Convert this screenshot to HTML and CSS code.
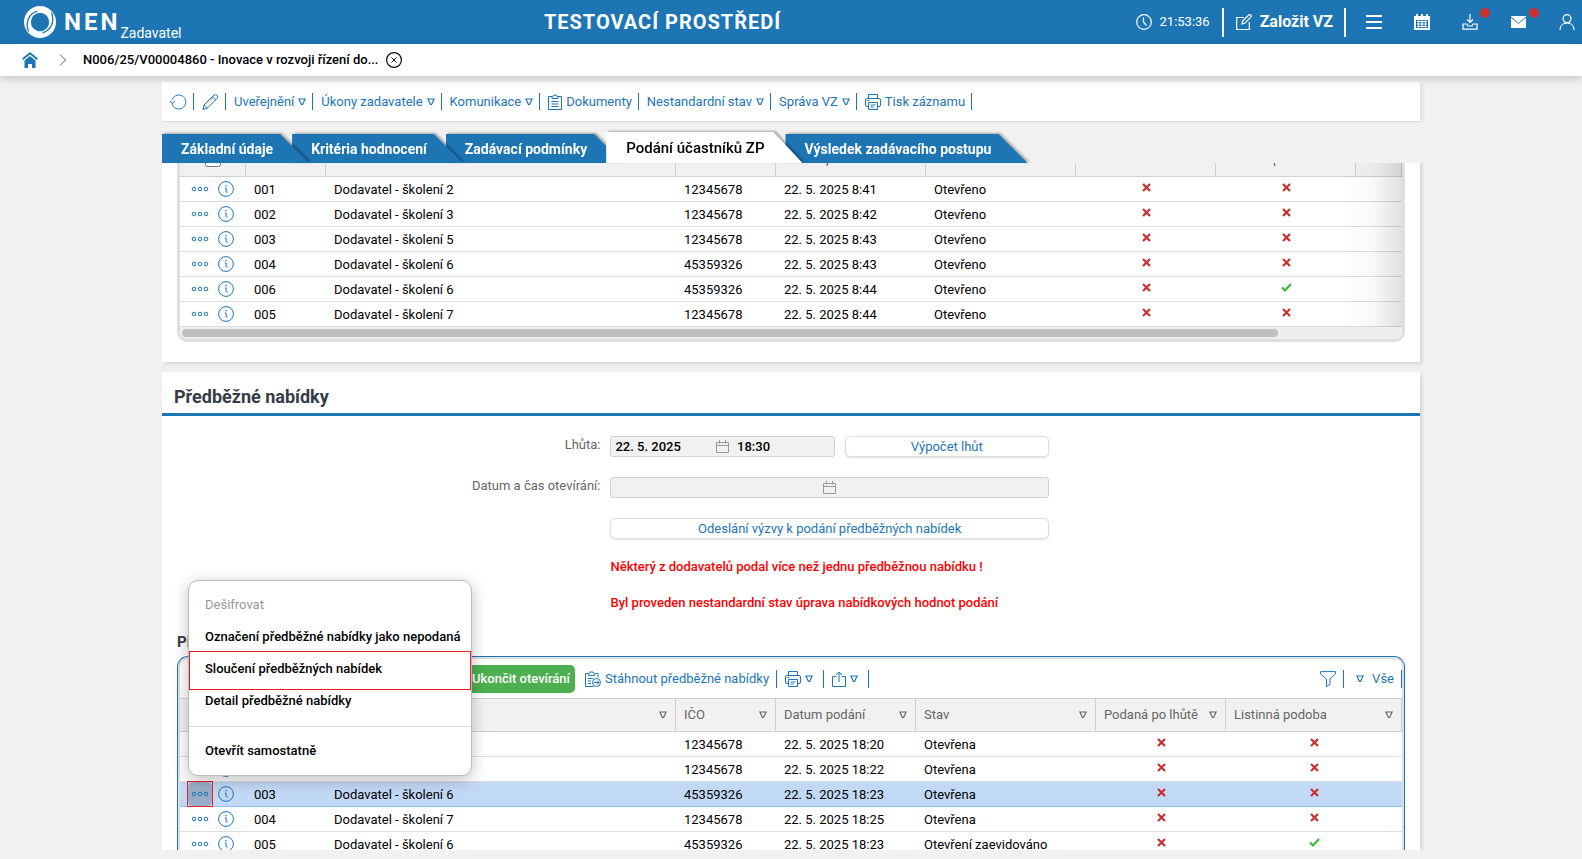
FILE: index.html
```html
<!DOCTYPE html>
<html lang="cs">
<head>
    <meta charset="UTF-8">
    <meta name="viewport" content="width=device-width, initial-scale=1.0">
    <title>NEN - Podání účastníků ZP</title>
    <link rel="stylesheet" href="styles.css">
</head>
<body>
    <svg class="sprite" aria-hidden="true">
        <symbol id="i-arrow" viewBox="0 0 8 8"><path d="M.9 1h6.2L4.6 6.4H3.4z" fill="none" stroke="currentColor" stroke-width="1.2"/></symbol>
        <symbol id="i-dots" viewBox="0 0 18 6"><g fill="none" stroke="currentColor"><circle cx="3" cy="3" r="1.8"/><circle cx="9" cy="3" r="1.8"/><circle cx="15" cy="3" r="1.8"/></g></symbol>
        <symbol id="i-info" viewBox="0 0 16 16"><g fill="none" stroke="currentColor"><circle cx="8" cy="8" r="7.4"/><path d="M6.800 7h1.300v3.600q0 .8 1.500.4" /></g><circle cx="8" cy="4.700" r=".8" fill="currentColor"/></symbol>
        <symbol id="i-cross" viewBox="0 0 9 9"><path d="M1 1l7 7M8 1L1 8" fill="none" stroke="#c9302f" stroke-width="2.2"/></symbol>
        <symbol id="i-check" viewBox="0 0 11 9"><path d="M1 4.5l3 3L10 1" fill="none" stroke="#3cb83c" stroke-width="2.2"/></symbol>
        <symbol id="i-calendar" viewBox="0 0 13 13"><path d="M.5 2.500h12v10H.5zM.5 5.500h12M3.500 0v3.500M9.500 0v3.500" fill="none" stroke="currentColor"/></symbol>
        <symbol id="i-print" viewBox="0 0 16 16"><g fill="none" stroke="currentColor"><path d="M3.5 4.5v-4h9v4M3.5 12.500H2q-1.500 0-1.500-1.500V6q0-1.500 1.500-1.500h12q1.500 0 1.500 1.500v5q0 1.500-1.500 1.500h-1.500"/><path d="M3.500 8.500h9v7h-9zM5.500 11h5M5.500 13h3M2.500 6.500h2"/></g></symbol>
    </svg>

    <header class="topbar">
        <a class="logo" href="#">
            <svg width="32" height="32" viewBox="0 0 32 32"><circle cx="16" cy="16" r="16" fill="#fff"/><circle cx="16" cy="16" r="9.200" fill="#1d75b4"/><path d="M4.500 25.500C1 16 5 7.500 13.500 5.200M27.500 6.500C31 16 27 24.500 18.500 26.800" fill="none" stroke="#1d75b4" stroke-width="1.300"/></svg>
            <span class="logo-name">NEN</span>
            <span class="logo-role">Zadavatel</span>
        </a>
        <div class="env-title">TESTOVACÍ PROSTŘEDÍ</div>
        <div class="clock">
            <svg width="16" height="16" viewBox="0 0 16 16" fill="none" stroke="currentColor" stroke-width="1.2"><circle cx="8" cy="8" r="7.300"/><path d="M7.500 3.500V8l3 3.500"/></svg>
            <span>21:53:36</span>
        </div>
        <button class="create">
            <svg width="16" height="16" viewBox="0 0 16 16" fill="none" stroke="currentColor" stroke-width="1.200"><path d="M8 3.500H.7v12h12.600V8M6 10l.6-3L13 .8q1-.6 1.800.2t.2 1.800L8.700 9.300z"/></svg>
            Založit VZ
        </button>
        <nav class="top-icons">
            <button aria-label="Menu"><svg width="16" height="16" viewBox="0 0 16 16"><path d="M0 2h16M0 8h16M0 14h16" stroke="#fff" stroke-width="2"/></svg></button>
            <button aria-label="Kalendář"><svg width="16" height="16" viewBox="0 0 16 16"><path fill="#fff" fill-rule="evenodd" d="M0 2h2V0h2v2h3V0h2v2h3V0h2v2h2v14H0zM2 6v8h12V6z"/><path d="M3 7.500h10M3 10h10M3 12.500h10M4.500 6.500v7M8 6.500v7M11.500 6.500v7" stroke="#fff"/></svg></button>
            <button class="has-news" aria-label="Stahování"><svg width="16" height="16" viewBox="0 0 16 16" fill="none" stroke="#fff" stroke-width="1.200"><path d="M8 0v8M5 5.500l3 3 3-3M1 10v5.200h14V10h-4l-1 2H6l-1-2z"/></svg></button>
            <button class="has-news" aria-label="Zprávy"><svg width="17" height="16" viewBox="0 0 17 16"><path fill="#fff" d="M1 2h15v12H1z"/><path d="M1 3l7.500 6.500L16 3" fill="none" stroke="#1d75b4" stroke-width="1"/></svg></button>
            <button aria-label="Uživatel"><svg width="16" height="16" viewBox="0 0 16 16" fill="none" stroke="#fff" stroke-width="1.200"><circle cx="8" cy="4.700" r="4"/><path d="M1 16c0-4.500 3-7 7-7s7 2.500 7 7"/></svg></button>
        </nav>
    </header>

    <nav class="breadcrumb">
        <a href="#" aria-label="Domů"><svg width="16" height="16" viewBox="0 0 16 16"><path fill="#1d75b4" d="M2.500 8.500L8 4l5.500 4.500V16h-3.500v-4H6v4H2.500z"/><path d="M.7 7.300L8 1.200l7.300 6.100" fill="none" stroke="#1d75b4" stroke-width="1.800"/></svg></a>
        <svg width="8" height="12" viewBox="0 0 8 12"><path d="M1 .5L6.500 6 1 11.500" fill="none" stroke="#666"/></svg>
        <a class="record" href="#">N006/25/V00004860 - Inovace v rozvoji řízení do...</a>
        <button aria-label="Zavřít"><svg width="16" height="16" viewBox="0 0 16 16" fill="none" stroke="#111"><circle cx="8" cy="8" r="7.400" stroke-width="1.200"/><path d="M5.500 5.500l5 5M10.500 5.500l-5 5"/></svg></button>
    </nav>

    <main>
        <div class="toolbar">
            <button aria-label="Obnovit"><svg width="17" height="16" viewBox="0 0 17 16" fill="none" stroke="currentColor"><path d="M2 9.500A7 7 0 1 0 2.300 5.500M0 6.500l2 3 3-2.500"/></svg></button>
            <button aria-label="Upravit"><svg width="17" height="16" viewBox="0 0 17 16" fill="none" stroke="currentColor"><path d="M1 15.500l1-4.500L12 1.200q1.500-1.200 3 .2t.2 3L5.500 14zM10.500 2.800l3.300 3.200M2 11l3.500 3M4 9l7-6.500"/></svg></button>
            <button>Uveřejnění <svg class="arrow"><use href="#i-arrow"/></svg></button>
            <button>Úkony zadavatele <svg class="arrow"><use href="#i-arrow"/></svg></button>
            <button>Komunikace <svg class="arrow"><use href="#i-arrow"/></svg></button>
            <button><svg width="14" height="16" viewBox="0 0 14 16" fill="none" stroke="currentColor"><path d="M4 2.500H.5v13h13v-13H10M4 4.500v-2q1.500 0 2-1.500h2q.5 1.500 2 1.500v2zM3.500 7.500h7M3.500 10h7M3.500 12.500h7"/></svg> Dokumenty</button>
            <button>Nestandardní stav <svg class="arrow"><use href="#i-arrow"/></svg></button>
            <button>Správa VZ <svg class="arrow"><use href="#i-arrow"/></svg></button>
            <button><svg width="16" height="16"><use href="#i-print"/></svg> Tisk záznamu</button>
        </div>

        <ul class="tabs">
            <li><a href="#">Základní údaje</a></li>
            <li><a href="#">Kritéria hodnocení</a></li>
            <li><a href="#">Zadávací podmínky</a></li>
            <li class="active"><a href="#">Podání účastníků ZP</a></li>
            <li><a href="#">Výsledek zadávacího postupu</a></li>
        </ul>

        <div class="content">
            <section class="panel requests">
                <div class="grid fade">
                    <table>
                        <colgroup><col class="c-actions"><col class="c-num"><col class="c-name"><col class="c-id"><col class="c-date"><col class="c-date"><col class="c-flag"><col class="c-flag"><col></colgroup>
                        <thead>
                            <tr><th class="pick"><input type="checkbox" aria-label="Vybrat vše"></th><th aria-label="Číslo"></th><th aria-label="Dodavatel"></th><th aria-label="IČO"></th><th>Datum podání</th><th aria-label="Stav"></th><th></th><th>Listinná podoba</th><th></th></tr>
                        </thead>
                        <tbody>
                            <tr><td class="actions"><button class="more" aria-label="Akce"><svg><use href="#i-dots"/></svg></button><button class="info" aria-label="Detail"><svg><use href="#i-info"/></svg></button></td><td>001</td><td>Dodavatel - školení 2</td><td>12345678</td><td>22. 5. 2025 8:41</td><td>Otevřeno</td><td class="flag"><svg><use href="#i-cross"/></svg></td><td class="flag"><svg><use href="#i-cross"/></svg></td><td></td></tr>
                            <tr><td class="actions"><button class="more" aria-label="Akce"><svg><use href="#i-dots"/></svg></button><button class="info" aria-label="Detail"><svg><use href="#i-info"/></svg></button></td><td>002</td><td>Dodavatel - školení 3</td><td>12345678</td><td>22. 5. 2025 8:42</td><td>Otevřeno</td><td class="flag"><svg><use href="#i-cross"/></svg></td><td class="flag"><svg><use href="#i-cross"/></svg></td><td></td></tr>
                            <tr><td class="actions"><button class="more" aria-label="Akce"><svg><use href="#i-dots"/></svg></button><button class="info" aria-label="Detail"><svg><use href="#i-info"/></svg></button></td><td>003</td><td>Dodavatel - školení 5</td><td>12345678</td><td>22. 5. 2025 8:43</td><td>Otevřeno</td><td class="flag"><svg><use href="#i-cross"/></svg></td><td class="flag"><svg><use href="#i-cross"/></svg></td><td></td></tr>
                            <tr><td class="actions"><button class="more" aria-label="Akce"><svg><use href="#i-dots"/></svg></button><button class="info" aria-label="Detail"><svg><use href="#i-info"/></svg></button></td><td>004</td><td>Dodavatel - školení 6</td><td>45359326</td><td>22. 5. 2025 8:43</td><td>Otevřeno</td><td class="flag"><svg><use href="#i-cross"/></svg></td><td class="flag"><svg><use href="#i-cross"/></svg></td><td></td></tr>
                            <tr><td class="actions"><button class="more" aria-label="Akce"><svg><use href="#i-dots"/></svg></button><button class="info" aria-label="Detail"><svg><use href="#i-info"/></svg></button></td><td>006</td><td>Dodavatel - školení 6</td><td>45359326</td><td>22. 5. 2025 8:44</td><td>Otevřeno</td><td class="flag"><svg><use href="#i-cross"/></svg></td><td class="flag"><svg><use href="#i-check"/></svg></td><td></td></tr>
                            <tr><td class="actions"><button class="more" aria-label="Akce"><svg><use href="#i-dots"/></svg></button><button class="info" aria-label="Detail"><svg><use href="#i-info"/></svg></button></td><td>005</td><td>Dodavatel - školení 7</td><td>12345678</td><td>22. 5. 2025 8:44</td><td>Otevřeno</td><td class="flag"><svg><use href="#i-cross"/></svg></td><td class="flag"><svg><use href="#i-cross"/></svg></td><td></td></tr>
                        </tbody>
                    </table>
                    <div class="scrollbar"><div class="thumb"></div></div>
                </div>
            </section>

            <section class="panel offers">
                <h2>Předběžné nabídky</h2>

                <div class="form">
                    <label for="deadline">Lhůta:</label>
                    <div class="form-row">
                        <div class="datetime">
                            <input type="text" id="deadline" value="22. 5. 2025" readonly>
                            <svg width="13" height="13"><use href="#i-calendar"/></svg>
                            <input type="text" aria-label="Čas lhůty" value="18:30" readonly>
                        </div>
                        <button class="btn">Výpočet lhůt</button>
                    </div>

                    <label for="opening">Datum a čas otevírání:</label>
                    <div class="datetime">
                        <input type="text" id="opening" readonly>
                        <svg width="13" height="13"><use href="#i-calendar"/></svg>
                        <input type="text" aria-label="Čas otevírání" readonly>
                    </div>

                    <button class="btn wide">Odeslání výzvy k podání předběžných nabídek</button>
                    <p class="warning">Některý z dodavatelů podal více než jednu předběžnou nabídku !</p>
                    <p class="warning">Byl proveden nestandardní stav úprava nabídkových hodnot podání</p>
                </div>

                <h3>Předběžné nabídky</h3>
                <div class="grid selected">
                    <div class="grid-toolbar">
                        <button class="finish"><svg width="14" height="14" viewBox="0 0 14 14" fill="none" stroke="#fff"><path d="M1 1h12v12H1zM4 7l2 2 4-4"/></svg>Ukončit otevírání</button>
                        <button class="tool"><svg width="16" height="16" viewBox="0 0 16 16" fill="none" stroke="currentColor"><path d="M3.500 2.500h-3v13h8M10.500 2.500h2.500v4M3.500 4.500v-2q1.200 0 1.500-1.500h3q.3 1.500 1.500 1.500v2zM3 7.500h5M3 10h3M3 12.500h3"/><circle cx="11.500" cy="11.500" r="4"/><path d="M8.500 11.500h5.500M12 9.500l2 2-2 2"/></svg>Stáhnout předběžné nabídky</button>
                        <button class="tool drop" aria-label="Tisk"><svg width="16" height="16"><use href="#i-print"/></svg><svg class="arrow"><use href="#i-arrow"/></svg></button>
                        <button class="tool drop" aria-label="Export"><svg width="14" height="16" viewBox="0 0 14 16" fill="none" stroke="currentColor"><path d="M4 5.500H.5v10h13v-10H10M7 11V1M4 4l3-3 3 3"/></svg><svg class="arrow"><use href="#i-arrow"/></svg></button>
                        <button class="tool filter" aria-label="Filtr"><svg width="16" height="16" viewBox="0 0 16 16" fill="none" stroke="currentColor"><path d="M.6.600h14.800V3L10 8v5.500l-3.500 2V8L.6 3z"/></svg></button>
                        <button class="tool all"><svg class="arrow"><use href="#i-arrow"/></svg>Vše</button>
                    </div>
                    <table>
                        <colgroup><col class="c-actions"><col class="c-num"><col class="c-name"><col class="c-id"><col class="c-sent"><col class="c-state"><col class="c-late"><col></colgroup>
                        <thead>
                            <tr>
                                <th></th>
                                <th></th>
                                <th><div class="head"><span></span><svg class="arrow"><use href="#i-arrow"/></svg></div></th>
                                <th><div class="head">IČO<svg class="arrow"><use href="#i-arrow"/></svg></div></th>
                                <th><div class="head">Datum podání<svg class="arrow"><use href="#i-arrow"/></svg></div></th>
                                <th><div class="head">Stav<svg class="arrow"><use href="#i-arrow"/></svg></div></th>
                                <th><div class="head">Podaná po lhůtě<svg class="arrow"><use href="#i-arrow"/></svg></div></th>
                                <th><div class="head">Listinná podoba<svg class="arrow"><use href="#i-arrow"/></svg></div></th>
                            </tr>
                        </thead>
                        <tbody>
                            <tr><td class="actions"><button class="more" aria-label="Akce"><svg><use href="#i-dots"/></svg></button><button class="info" aria-label="Detail"><svg><use href="#i-info"/></svg></button></td><td></td><td></td><td>12345678</td><td>22. 5. 2025 18:20</td><td>Otevřena</td><td class="flag"><svg><use href="#i-cross"/></svg></td><td class="flag"><svg><use href="#i-cross"/></svg></td></tr>
                            <tr><td class="actions"><button class="more" aria-label="Akce"><svg><use href="#i-dots"/></svg></button><button class="info" aria-label="Detail"><svg><use href="#i-info"/></svg></button></td><td></td><td></td><td>12345678</td><td>22. 5. 2025 18:22</td><td>Otevřena</td><td class="flag"><svg><use href="#i-cross"/></svg></td><td class="flag"><svg><use href="#i-cross"/></svg></td></tr>
                            <tr class="current"><td class="actions"><button class="more" aria-label="Akce"><svg><use href="#i-dots"/></svg></button><button class="info" aria-label="Detail"><svg><use href="#i-info"/></svg></button></td><td>003</td><td>Dodavatel - školení 6</td><td>45359326</td><td>22. 5. 2025 18:23</td><td>Otevřena</td><td class="flag"><svg><use href="#i-cross"/></svg></td><td class="flag"><svg><use href="#i-cross"/></svg></td></tr>
                            <tr><td class="actions"><button class="more" aria-label="Akce"><svg><use href="#i-dots"/></svg></button><button class="info" aria-label="Detail"><svg><use href="#i-info"/></svg></button></td><td>004</td><td>Dodavatel - školení 7</td><td>12345678</td><td>22. 5. 2025 18:25</td><td>Otevřena</td><td class="flag"><svg><use href="#i-cross"/></svg></td><td class="flag"><svg><use href="#i-cross"/></svg></td></tr>
                            <tr><td class="actions"><button class="more" aria-label="Akce"><svg><use href="#i-dots"/></svg></button><button class="info" aria-label="Detail"><svg><use href="#i-info"/></svg></button></td><td>005</td><td>Dodavatel - školení 6</td><td>45359326</td><td>22. 5. 2025 18:23</td><td>Otevření zaevidováno</td><td class="flag"><svg><use href="#i-cross"/></svg></td><td class="flag"><svg><use href="#i-check"/></svg></td></tr>
                        </tbody>
                    </table>
                </div>

                <div class="context-menu">
                    <button disabled>Dešifrovat</button>
                    <button>Označení předběžné nabídky jako nepodaná</button>
                    <button class="marked">Sloučení předběžných nabídek</button>
                    <button>Detail předběžné nabídky</button>
                    <hr>
                    <button>Otevřít samostatně</button>
                </div>
            </section>
        </div>
    </main>
</body>
</html>
```
FILE: styles.css
```css
/* Základ */
* {
    box-sizing: border-box;
}

body {
    margin: 0;
    height: 100vh;
    display: flex;
    flex-direction: column;
    overflow: hidden;
    font-family: Roboto, "Liberation Sans", sans-serif;
    font-size: 13px;
    line-height: 16px;
    color: #000;
    background-color: #f1f1f1;
}

button {
    padding: 0;
    border: none;
    background: none;
    font: inherit;
    color: inherit;
    cursor: pointer;
}

a {
    color: inherit;
    text-decoration: none;
}

svg {
    flex: none;
    display: block;
}

.sprite {
    position: absolute;
    width: 0;
    height: 0;
}

.arrow {
    width: 8px;
    height: 8px;
}

/* Horní lišta */
.topbar {
    flex: none;
    height: 44px;
    display: flex;
    align-items: center;
    padding: 0 7px 0 24px;
    background-color: #1d75b4;
    color: #fff;
}

.logo {
    display: flex;
    align-items: center;
}

.logo-name {
    margin-left: 8px;
    font-size: 24px;
    font-weight: bold;
    letter-spacing: 3px;
}

.logo-role {
    align-self: flex-end;
    font-size: 14px;
    line-height: 10px;
}

.env-title {
    flex: 1;
    padding-left: 8px;
    text-align: center;
    font-size: 20px;
    font-weight: bold;
    letter-spacing: 1px;
}

.clock {
    display: flex;
    align-items: center;
    gap: 8px;
    padding-right: 12px;
}

.create {
    height: 29px;
    display: flex;
    align-items: center;
    gap: 8px;
    padding: 0 11px 0 12px;
    border: solid #fff;
    border-width: 0 2px;
    font-size: 16px;
    font-weight: bold;
}

.top-icons {
    display: flex;
    gap: 32px;
    padding-left: 20px;
}

.top-icons button {
    position: relative;
}

.has-news::after {
    content: "";
    position: absolute;
    top: -6px;
    right: -12px;
    width: 10px;
    height: 10px;
    border-radius: 50%;
    background-color: #c9302f;
}

.breadcrumb {
    flex: none;
    position: relative;
    z-index: 5;
    height: 32px;
    display: flex;
    align-items: center;
    padding-left: 22px;
    background-color: #fff;
    box-shadow: 0 2px 8px rgba(0, 0, 0, 0.2);
}

.breadcrumb > svg {
    margin: 0 16px 0 21px;
}

.record {
    margin-right: 8px;
    font-weight: 500;
}

/* Obsah */
main {
    flex: 1;
    min-height: 0;
    width: 100%;
    max-width: 1258px;
    margin: 6px auto 9px;
    display: flex;
    flex-direction: column;
}

.toolbar {
    flex: none;
    height: 40px;
    display: flex;
    align-items: center;
    background-color: #fff;
    color: #1d75b4;
    border-bottom: 1px solid #ddd;
    box-shadow: 3px 0 3px rgba(0, 0, 0, 0.06);
}

.toolbar button {
    height: 17px;
    display: flex;
    align-items: center;
    gap: 4px;
    padding: 0 6px 0 8px;
    line-height: 14px;
    border-right: 1px solid #1d75b4;
}

/* Záložky */
.tabs {
    flex: none;
    position: relative;
    z-index: 2;
    height: 41px;
    margin: 0;
    padding: 0;
    display: flex;
    align-items: flex-end;
    list-style: none;
}

.tabs li {
    position: relative;
    margin-right: -17px;
    filter: drop-shadow(2px -1px 1px rgba(0, 0, 0, 0.3));
}

.tabs li:nth-child(1) {
    z-index: 3;
}

.tabs li:nth-child(2) {
    z-index: 2;
}

.tabs a {
    display: block;
    height: 29px;
    padding: 0 36px 0 19px;
    line-height: 31px;
    font-size: 14px;
    font-weight: bold;
    color: #fff;
    background-color: #1d75b4;
    clip-path: polygon(0 0, calc(100% - 29px) 0, 100% 100%, 0 100%);
}

.tabs .active {
    z-index: 4;
}

.tabs .active a {
    height: 31px;
    padding: 0 38px 0 20px;
    line-height: 33px;
    font-size: 15px;
    font-weight: 500;
    color: #000;
    background-color: #fff;
}

.content {
    flex: 1;
    min-height: 0;
    margin-right: -8px;
    padding-right: 8px;
    overflow: hidden;
}

.panel {
    position: relative;
    background-color: #fff;
    box-shadow: 2px 2px 4px rgba(0, 0, 0, 0.12);
}

.requests {
    padding: 0 15px 20px;
    margin-bottom: 10px;
}

.offers {
    height: 700px;
}

/* Tabulky */
.grid {
    position: relative;
    border: 3px solid #dedfe1;
    border-radius: 10px;
    overflow: hidden;
}

/* hlavička je odrolovaná pod záložky */
.requests .grid {
    margin-top: -25px;
}

.fade::after {
    content: "";
    position: absolute;
    top: 0;
    right: 0;
    bottom: 12px;
    width: 56px;
    background: linear-gradient(to right, rgba(0, 0, 0, 0), rgba(0, 0, 0, 0.03) 50%, rgba(0, 0, 0, 0.12));
}

table {
    width: 100%;
    table-layout: fixed;
    border-collapse: separate;
    border-spacing: 0;
}

.c-actions { width: 66px; }
.c-num { width: 80px; }
.c-name { width: 350px; }
.c-id { width: 100px; }
.c-date { width: 150px; }
.c-flag { width: 140px; }
.c-sent { width: 140px; }
.c-state { width: 180px; }
.c-late { width: 130px; }

th {
    height: 36px;
    padding: 0 8px;
    text-align: left;
    font-weight: normal;
    color: #666;
    background-color: #f1f1f1;
    border-right: 1px solid #d0d0d0;
    border-bottom: 1px solid #d0d0d0;
}

.pick {
    padding-left: 25px;
}

.pick input {
    display: block;
    width: 16px;
    height: 16px;
    margin: 0;
}

.head {
    display: flex;
    align-items: center;
    justify-content: space-between;
    white-space: nowrap;
}

td {
    height: 25px;
    padding: 1px 8px 0;
    border-bottom: 1px solid #ddd;
}

.actions {
    padding: 0;
}

.actions button {
    height: 24px;
    float: left;
}

.more {
    position: relative;
    width: 24px;
    margin: 0 6px 0 8px;
    border-radius: 5px;
    color: #1d75b4;
}

.more svg {
    width: 18px;
    height: 6px;
    margin: 0 auto;
}

.info {
    color: #1d75b4;
}

.info svg {
    width: 16px;
    height: 16px;
}

.flag svg {
    width: 11px;
    height: 9px;
    margin: 0 auto 4px;
}

.scrollbar {
    height: 12px;
    padding: 2px;
    background-color: #eee;
}

.thumb {
    width: 90%;
    height: 8px;
    border-radius: 4px;
    background-color: #c1c1c1;
}

/* Předběžné nabídky */
h2 {
    margin: 0;
    padding: 15px 12px 6px;
    font-size: 18px;
    line-height: 20px;
    font-weight: bold;
    color: #333d47;
    border-bottom: 3px solid #1d75b4;
}

.form {
    display: grid;
    grid-template-columns: 17fr 17fr 14fr;
    column-gap: 10px;
    row-gap: 20px;
    padding-top: 20px;
}

.form label {
    grid-column: 1;
    padding-top: 1px;
    text-align: right;
    color: #666;
}

.form-row {
    display: grid;
    grid-template-columns: 224fr 204fr;
    gap: 10px;
}

.datetime {
    height: 21px;
    display: flex;
    align-items: center;
    border: 1px solid #d0d0d0;
    border-radius: 3px;
    background-color: #f1f1f1;
    color: #999;
}

.datetime input {
    flex: 1;
    min-width: 0;
    width: 0;
    padding: 0 4px;
    border: none;
    background: none;
    font: inherit;
    font-weight: 500;
    color: #000;
}

.datetime svg + input {
    padding: 0 0 0 8px;
}

.btn {
    height: 21px;
    border: 1px solid #ddd;
    border-radius: 5px;
    background-color: #fff;
    color: #1d75b4;
    box-shadow: 0 1px 2px rgba(0, 0, 0, 0.12);
}

.wide {
    grid-column: 2;
}

.warning {
    grid-column: 2;
    margin: 0;
    font-weight: 500;
    color: #f00;
}

h3 {
    margin: 23px 15px 7px;
    font-size: 15px;
    line-height: 16px;
    font-weight: bold;
    color: #333d47;
}

.selected {
    margin: 0 16px;
    border-width: 2px;
    box-shadow: 0 0 0 1px #1d75b4;
}

.selected th {
    height: 34px;
    border-top: 1px solid #d0d0d0;
}

.grid-toolbar {
    height: 39px;
    display: flex;
    align-items: center;
    padding-left: 265px;
    color: #1d75b4;
}

.finish {
    height: 28px;
    display: flex;
    align-items: center;
    gap: 5px;
    padding: 0 5px 0 8px;
    margin-right: 2px;
    border-radius: 5px;
    background-color: #4caf50;
    color: #fff;
    font-weight: 500;
}

.tool {
    height: 18px;
    display: flex;
    align-items: center;
    gap: 4px;
    padding: 0 7px 0 8px;
    border-right: 1px solid #1d75b4;
}

.drop {
    padding-right: 10px;
}

.filter {
    margin-left: auto;
}

.all {
    gap: 8px;
    padding-left: 12px;
}

.current td {
    background-color: #c2d9f5;
    border-bottom-color: #8fbeea;
}

.current .more {
    background-color: #9aadc8;
}

.current .more::after {
    content: "";
    position: absolute;
    inset: -1px;
    border: 1px solid #ed1c24;
}

/* Kontextová nabídka */
.context-menu {
    position: absolute;
    top: 208px;
    left: 26px;
    z-index: 3;
    width: 284px;
    padding: 8px 0;
    border: 1px solid #bbb;
    border-radius: 10px;
    background-color: #fff;
    box-shadow: 0 4px 16px rgba(0, 0, 0, 0.25);
}

.context-menu button {
    position: relative;
    display: block;
    width: 100%;
    height: 32px;
    padding: 0 16px;
    text-align: left;
    font-weight: 500;
    white-space: nowrap;
}

.context-menu button:disabled {
    font-weight: normal;
    color: #999;
}

.context-menu hr {
    margin: 9px 0 8px;
    border: none;
    border-top: 1px solid #ddd;
}

.marked::after {
    content: "";
    position: absolute;
    inset: -2px 0 -5px;
    border: 1px solid #ed1c24;
}
```
